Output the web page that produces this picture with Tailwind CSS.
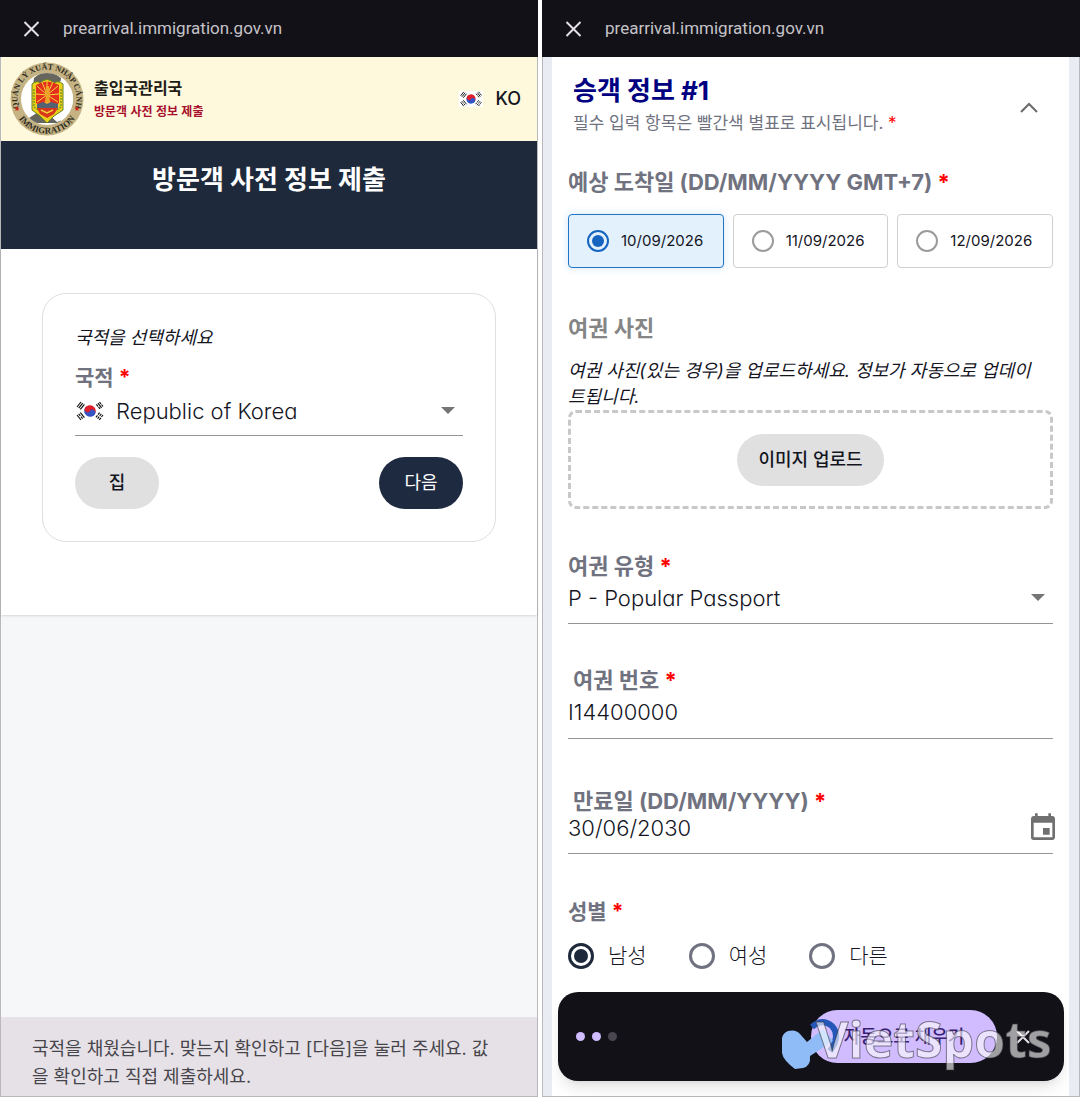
<!DOCTYPE html>
<html lang="ko">
<head>
    <meta charset="UTF-8">
    <meta name="viewport" content="width=device-width, initial-scale=1.0">
    <title>방문객 사전 정보 제출</title>
    <script src="https://cdn.jsdelivr.net/npm/@tailwindcss/browser@4"></script>
    <style>
        body {
            font-family: 'Inter', 'Noto Sans CJK KR', sans-serif;
        }
        /* Single-storey "a" in form values */
        .value {
            font-feature-settings: 'cv11';
        }
    </style>
</head>
<body class="bg-white text-[#14151f]">

    <!-- Shared flag symbol -->
    <svg class="hidden">
        <symbol id="flag-kr" viewBox="0 0 30 20">
            <rect width="30" height="20" fill="#fff"/>
            <g transform="rotate(33 15 10)">
                <path d="M9.200 10a5.800 5.800 0 0 1 11.600 0z" fill="#e0202c"/>
                <path d="M9.200 10a5.800 5.800 0 0 0 11.600 0z" fill="#3553c4"/>
                <circle cx="12.100" cy="10" r="2.900" fill="#e0202c"/>
                <circle cx="17.900" cy="10" r="2.900" fill="#3553c4"/>
            </g>
            <g stroke="#111" stroke-width="1.200" fill="none">
                <path d="M2 6l4-5M3.700 7.200l4-5M5.400 8.400l4-5"/>
                <path d="M24.500 1l1.500 2M26.500 3.500l1.500 2M23 2.200l3.600 4.700M21.400 3.400l1.500 2M23.500 5.900l1.500 2"/>
                <path d="M2 14l4 5M3.700 12.800l1.600 2M6 15.700l1.600 2M5.400 11.600l4 5"/>
                <path d="M28 14l-1.600 2M25.900 16.800l-1.600 2M26.300 12.800l-1.600 2M24.200 15.700l-1.600 2M24.600 11.600l-1.600 2M22.500 14.400l-1.600 2"/>
            </g>
        </symbol>
    </svg>

    <div class="grid h-screen min-h-[1097px] grid-cols-2 gap-1">

        <!-- Nationality screen -->
        <section class="flex flex-col border-x border-b border-[#b9b9bd] bg-[#f5f7f9]">
            <div class="-mx-px flex h-[57px] items-center gap-[19px] bg-[#131118] px-5 text-[#c5c3c8]">
                <button type="button" aria-label="닫기">
                    <svg class="size-6" viewBox="0 0 24 24" fill="none" stroke="#e3e1e6" stroke-width="2"><path d="M4.500 5l14 14M18.500 5l-14 14"/></svg>
                </button>
                <span class="font-[Roboto] text-[17px]">prearrival.immigration.gov.vn</span>
            </div>

            <header class="flex h-[84px] items-center bg-[#fef8dc] pr-4 pl-2">
                <svg class="size-[76px]" viewBox="0 0 76 76">
                    <defs>
                        <path id="ring-top" d="M14 55A29.500 29.500 0 1 1 62 55"/>
                        <path id="ring-bottom" d="M4.500 44.500A34 34 0 0 0 71.500 44.500"/>
                        <clipPath id="disc"><circle cx="38" cy="38" r="26"/></clipPath>
                    </defs>
                    <circle cx="38" cy="38" r="36.500" fill="#c5b384"/>
                    <circle cx="38" cy="38" r="26" fill="#fff"/>
                    <g clip-path="url(#disc)">
                        <path d="M25 17Q38 5 52 17L51 25H24z" fill="#66665f"/>
                        <path d="M20 57L37 46L51 52L52 62H26z" fill="#66665f"/>
                        <path d="M51 20L66 30V54L48 61L38 52z" fill="#fff"/>
                    </g>
                    <path d="M23 23Q28 19 31 22Q38 15 45 22Q49 19 54 23V49L45 55L38 62L31 55L23 49z" fill="#ead21c" stroke="#6b811c" stroke-width="1"/>
                    <path d="M27 24Q38 17 50 24V42L38 50L27 42z" fill="#e5301d"/>
                    <path d="M38 34L28 25M38 34L33 21M38 34L38 19M38 34L44 21M38 34L49 25M38 34L27 33M38 34L50 33M38 34L28 41M38 34L49 41" stroke="#f6d53b" stroke-width="1"/>
                    <path d="M37 25h3l1 10h-1l2 9h-7l2-9h-1z" fill="#eca526"/>
                    <path d="M25 28v18l6 4M52 28v18l-6 4" fill="none" stroke="#7d9a24" stroke-width="1.500" stroke-dasharray="2 1"/>
                    <path d="M28 43l6-2 4 2 4-2 7 2v4H28z" fill="#526272"/>
                    <path d="M28 47h21l-4 6-7 4-7-4z" fill="#d8361c"/>
                    <path d="M32 49l6 3 6-3" fill="none" stroke="#f3d035" stroke-width="1.500"/>
                    <g fill="#2e2c22" font-family="Liberation Serif, serif" font-weight="700" text-anchor="middle">
                        <text font-size="8"><textPath href="#ring-top" startOffset="50%">QUẢN LÝ XUẤT NHẬP CẢNH</textPath></text>
                        <text font-size="9"><textPath href="#ring-bottom" startOffset="50%">IMMIGRATION</textPath></text>
                    </g>
                    <path id="star" d="M8 45l.7 1.800 1.900.1-1.500 1.200.5 1.900L8 49l-1.600 1 .5-1.900-1.500-1.200 1.900-.1z" fill="#cf2418"/>
                    <use href="#star" x="60"/>
                </svg>
                <div class="ml-[9px] font-['Noto_Sans_CJK_KR']">
                    <h2 class="text-base leading-6 font-bold text-[#211d18]">출입국관리국</h2>
                    <p class="text-xs leading-6 font-bold text-[#a80f2c]">방문객 사전 정보 제출</p>
                </div>
                <button type="button" class="ml-auto flex items-center gap-3 text-lg font-medium">
                    <svg class="h-[18px] w-6"><use href="#flag-kr"/></svg>KO
                </button>
            </header>

            <div class="h-[108px] bg-[#1e2a3b] pt-[21px] text-center">
                <h1 class="text-[26px] leading-9 font-bold text-white">방문객 사전 정보 제출</h1>
            </div>

            <main class="bg-white px-[41px] pt-11 pb-[73px] shadow">
                <form class="rounded-3xl border border-[#dedfe2] px-8 pt-8 pb-8">
                    <p class="text-lg leading-6 italic">국적을 선택하세요</p>
                    <label for="nation" class="mt-[10px] block text-[21px] leading-9 font-bold text-[#70737f]">국적 <span class="text-[#f00]">*</span></label>
                    <div class="flex h-10 items-center border-b border-[#949494] pb-[10px]">
                        <svg class="h-5 w-[30px] shrink-0"><use href="#flag-kr"/></svg>
                        <select id="nation" class="value ml-[11px] grow appearance-none text-[22px] leading-8 font-light outline-none">
                            <option>Republic of Korea</option>
                        </select>
                        <svg class="mr-2 h-[7px] w-[14px]" viewBox="0 0 14 7"><path d="M0 0h14L7 7z" fill="#757575"/></svg>
                    </div>
                    <div class="mt-[21px] flex justify-between">
                        <button type="button" class="h-[52px] w-[84px] rounded-full bg-[#e0e0e0] text-lg font-medium">집</button>
                        <button type="submit" class="h-[52px] w-[84px] rounded-full bg-[#1e2a3f] text-lg text-white">다음</button>
                    </div>
                </form>
            </main>

            <p class="mt-auto bg-[#e6e1e6] pt-[18px] pr-9 pb-[5px] pl-[31px] text-lg leading-7 break-all text-[#47454c]">국적을 채웠습니다. 맞는지 확인하고 [다음]을 눌러 주세요. 값을 확인하고 직접 제출하세요.</p>
        </section>

        <!-- Passenger screen -->
        <section class="relative flex flex-col border-x border-b border-[#b9b9bd] bg-[#e9edf3]">
            <div class="-mx-px flex h-[57px] items-center gap-[19px] bg-[#131118] px-5 text-[#c5c3c8]">
                <button type="button" aria-label="닫기">
                    <svg class="size-6" viewBox="0 0 24 24" fill="none" stroke="#e3e1e6" stroke-width="2"><path d="M4.500 5l14 14M18.500 5l-14 14"/></svg>
                </button>
                <span class="font-[Roboto] text-[17px]">prearrival.immigration.gov.vn</span>
            </div>

            <form class="mr-[10px] ml-[9px] grow bg-white px-4 pt-4">
                <div class="flex items-center justify-between pr-[15px] pl-[5px]">
                    <div>
                        <h2 class="text-[26px] leading-9 font-bold text-[#000080]">승객 정보 #1</h2>
                        <p class="text-[17px] leading-7 text-[#70737f]">필수 입력 항목은 빨간색 별표로 표시됩니다. <span class="text-[#f00]">*</span></p>
                    </div>
                    <button type="button" aria-label="접기" class="pt-1">
                        <svg class="h-3 w-[18px]" viewBox="0 0 18 12" fill="none" stroke="#6b6b6b" stroke-width="2"><path d="M1 11l8-8 8 8"/></svg>
                    </button>
                </div>

                <fieldset class="mt-[27px]">
                    <legend class="text-[22px] leading-9 font-bold text-[#70737f]">예상 도착일 (DD/MM/YYYY GMT+7) <span class="text-[#f00]">*</span></legend>
                    <div class="mt-[14px] grid grid-cols-3 gap-[9px] text-[15px]">
                        <label class="flex h-[54px] items-center gap-3 rounded border border-[#1f74c4] bg-[#e3f1fd] pl-[18px] shadow-[0_0_8px_#1976d230]">
                            <input type="radio" name="arrival" checked class="size-[22px] appearance-none rounded-full border-2 border-[#1565c0] bg-clip-content p-[3px] checked:bg-[#1565c0]">10/09/2026
                        </label>
                        <label class="flex h-[54px] items-center gap-3 rounded border border-[#cfcfcf] pl-[18px]">
                            <input type="radio" name="arrival" class="size-[22px] appearance-none rounded-full border-2 border-[#9b9b9b] bg-clip-content p-[3px] checked:bg-[#1565c0]">11/09/2026
                        </label>
                        <label class="flex h-[54px] items-center gap-3 rounded border border-[#cfcfcf] pl-[18px]">
                            <input type="radio" name="arrival" class="size-[22px] appearance-none rounded-full border-2 border-[#9b9b9b] bg-clip-content p-[3px] checked:bg-[#1565c0]">12/09/2026
                        </label>
                    </div>
                </fieldset>

                <h3 class="mt-[42px] text-[22px] leading-9 font-bold text-[#858585]">여권 사진</h3>
                <p class="mt-3 pr-3 text-lg leading-[26px] break-all italic">여권 사진(있는 경우)을 업로드하세요. 정보가 자동으로 업데이트됩니다.</p>
                <div class="flex h-[99px] items-center justify-center rounded-lg border-[3px] border-dashed border-[#c8c8c8]">
                    <button type="button" class="h-[52px] rounded-full bg-[#e0e0e0] px-[21px] text-lg font-medium">이미지 업로드</button>
                </div>

                <label for="ptype" class="mt-[39px] block text-[22px] leading-9 font-bold text-[#70737f]">여권 유형 <span class="text-[#f00]">*</span></label>
                <div class="flex h-10 items-center border-b border-[#949494] pb-3">
                    <select id="ptype" class="value grow appearance-none text-[22px] leading-8 font-light outline-none">
                        <option>P - Popular Passport</option>
                    </select>
                    <svg class="mr-2 h-[7px] w-[14px]" viewBox="0 0 14 7"><path d="M0 0h14L7 7z" fill="#757575"/></svg>
                </div>

                <label for="pnum" class="mt-[38px] block pl-[5px] text-[22px] leading-9 font-bold text-[#70737f]">여권 번호 <span class="text-[#f00]">*</span></label>
                <div class="flex h-[41px] items-center border-b border-[#949494] pb-3">
                    <input id="pnum" type="text" value="I14400000" class="value w-full text-[22px] leading-8 font-light outline-none">
                </div>

                <label for="expiry" class="mt-[46px] block pl-[5px] text-[22px] leading-8 font-bold text-[#70737f]">만료일 (DD/MM/YYYY) <span class="text-[#f00]">*</span></label>
                <div class="flex h-[37px] items-center border-b border-[#949494] pb-[14px]">
                    <input id="expiry" type="text" value="30/06/2030" class="value w-full text-[22px] leading-8 font-light outline-none">
                    <button type="button" aria-label="달력" class="-mr-[6px]">
                        <svg class="size-8" viewBox="0 0 24 24" fill="#707070"><path d="M17 12h-5v5h5v-5zM16 1v2H8V1H6v2H5c-1.110 0-1.990.9-1.990 2L3 19a2 2 0 0 0 2 2h14c1.100 0 2-.9 2-2V5c0-1.100-.9-2-2-2h-1V1h-2zm3 18H5V8h14v11z"/></svg>
                    </button>
                </div>

                <fieldset class="mt-10">
                    <legend class="text-[21px] leading-9 font-bold text-[#70737f]">성별 <span class="text-[#f00]">*</span></legend>
                    <div class="mt-2.5 flex gap-[42px] text-[21px] leading-8 font-light">
                        <label class="flex items-center gap-[14px]"><input type="radio" name="gender" checked class="size-[26px] appearance-none rounded-full border-3 border-[#1e2a3b] bg-clip-content p-[3px] checked:bg-[#1e2a3b]">남성</label>
                        <label class="flex items-center gap-[14px]"><input type="radio" name="gender" class="size-[26px] appearance-none rounded-full border-3 border-[#70737f] bg-clip-content p-[3px] checked:bg-[#1e2a3b]">여성</label>
                        <label class="flex items-center gap-[14px]"><input type="radio" name="gender" class="size-[26px] appearance-none rounded-full border-3 border-[#70737f] bg-clip-content p-[3px] checked:bg-[#1e2a3b]">다른</label>
                    </div>
                </fieldset>
            </form>

            <!-- Autofill bar -->
            <div class="absolute inset-x-[15px] bottom-[15px] flex h-[89px] items-center rounded-[20px] bg-[#131118] pr-8 pl-[18px] shadow-lg">
                <span class="flex gap-[7px]">
                    <i class="size-[9px] rounded-full bg-[#d0bcff]"></i>
                    <i class="size-[9px] rounded-full bg-[#d0bcff]"></i>
                    <i class="size-[9px] rounded-full bg-[#49464e]"></i>
                </span>
                <button type="button" class="ml-auto h-[53px] w-[186px] rounded-full bg-[#d0bcff] text-lg font-medium text-[#381e72]">자동으로 채우기</button>
                <button type="button" aria-label="닫기" class="ml-[17px]">
                    <svg class="size-[18px]" viewBox="0 0 18 18" fill="none" stroke="#e6e0e9" stroke-width="2"><path d="M3 3l12 12M15 3L3 15"/></svg>
                </button>
                <!-- Site mark over the bar -->
                <svg class="pointer-events-none absolute right-3 bottom-0 h-[80px] w-[275px]" viewBox="0 0 275 80">
                    <path d="M35 26Q45 17 55 25Q64 35 53 50" fill="none" stroke="#2457b8" stroke-width="6"/>
                    <path d="M5 37Q6 32 11 30Q19 28 23 33L30 41L46 28L56 40L33 55Q34 65 26 67L18 68Q6 59 5 52z" fill="#8fbcf7"/>
                    <text x="39" y="57" font-family="Open Sans, sans-serif" font-size="50" font-weight="700" fill="#fff" fill-opacity=".6" stroke="#39363f" stroke-width="1" stroke-opacity=".6">VietSpots</text>
                </svg>
            </div>
        </section>
    </div>
</body>
</html>
